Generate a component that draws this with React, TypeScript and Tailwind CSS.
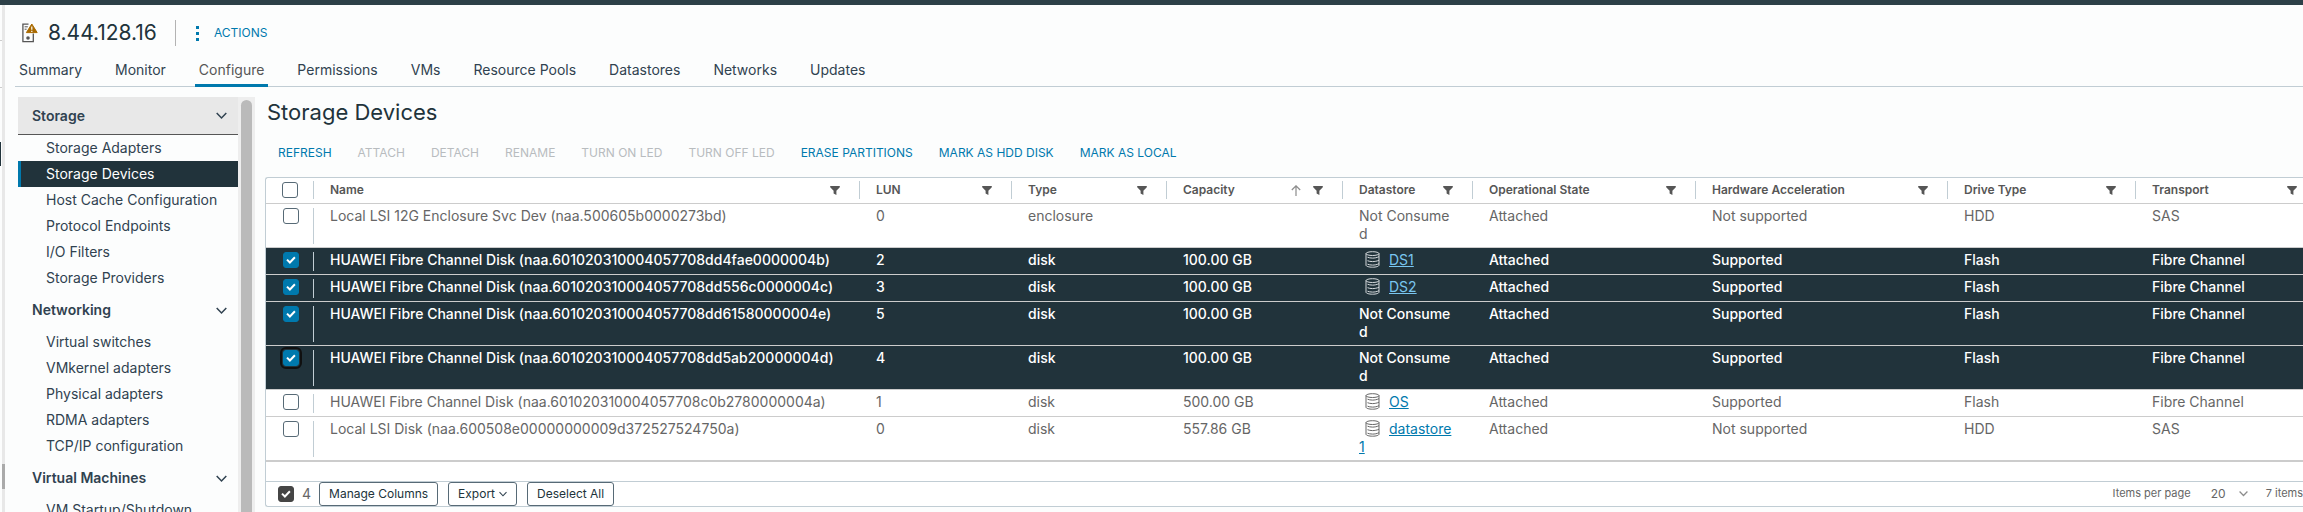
import { useState } from "react";
import clsx from "clsx";

type Device = {
  id: string;
  name: string;
  lun: number;
  type: string;
  capacity: string;
  datastore?: string;
  acceleration: string;
  drive: string;
  transport: string;
};

const tabs = [
  "Summary",
  "Monitor",
  "Configure",
  "Permissions",
  "VMs",
  "Resource Pools",
  "Datastores",
  "Networks",
  "Updates",
];

const menu = [
  {
    title: "Storage",
    items: [
      "Storage Adapters",
      "Storage Devices",
      "Host Cache Configuration",
      "Protocol Endpoints",
      "I/O Filters",
      "Storage Providers",
    ],
  },
  {
    title: "Networking",
    items: [
      "Virtual switches",
      "VMkernel adapters",
      "Physical adapters",
      "RDMA adapters",
      "TCP/IP configuration",
    ],
  },
  { title: "Virtual Machines", items: ["VM Startup/Shutdown"] },
];

const actions = [
  { label: "REFRESH", enabled: true },
  { label: "ATTACH", enabled: false },
  { label: "DETACH", enabled: false },
  { label: "RENAME", enabled: false },
  { label: "TURN ON LED", enabled: false },
  { label: "TURN OFF LED", enabled: false },
  { label: "ERASE PARTITIONS", enabled: true },
  { label: "MARK AS HDD DISK", enabled: true },
  { label: "MARK AS LOCAL", enabled: true },
];

const columns = [
  { label: "Name", width: "" },
  { label: "LUN", width: "w-[152px]" },
  { label: "Type", width: "w-[155px]" },
  { label: "Capacity", width: "w-[176px]", sorted: true },
  { label: "Datastore", width: "w-[130px]" },
  { label: "Operational State", width: "w-[223px]" },
  { label: "Hardware Acceleration", width: "w-[252px]" },
  { label: "Drive Type", width: "w-[188px]" },
  { label: "Transport", width: "w-[167px]" },
];

const devices: Device[] = [
  { id: "enc", name: "Local LSI 12G Enclosure Svc Dev (naa.500605b0000273bd)", lun: 0, type: "enclosure", capacity: "", acceleration: "Not supported", drive: "HDD", transport: "SAS" },
  { id: "4b", name: "HUAWEI Fibre Channel Disk (naa.601020310004057708dd4fae0000004b)", lun: 2, type: "disk", capacity: "100.00 GB", datastore: "DS1", acceleration: "Supported", drive: "Flash", transport: "Fibre Channel" },
  { id: "4c", name: "HUAWEI Fibre Channel Disk (naa.601020310004057708dd556c0000004c)", lun: 3, type: "disk", capacity: "100.00 GB", datastore: "DS2", acceleration: "Supported", drive: "Flash", transport: "Fibre Channel" },
  { id: "4e", name: "HUAWEI Fibre Channel Disk (naa.601020310004057708dd61580000004e)", lun: 5, type: "disk", capacity: "100.00 GB", acceleration: "Supported", drive: "Flash", transport: "Fibre Channel" },
  { id: "4d", name: "HUAWEI Fibre Channel Disk (naa.601020310004057708dd5ab20000004d)", lun: 4, type: "disk", capacity: "100.00 GB", acceleration: "Supported", drive: "Flash", transport: "Fibre Channel" },
  { id: "4a", name: "HUAWEI Fibre Channel Disk (naa.601020310004057708c0b2780000004a)", lun: 1, type: "disk", capacity: "500.00 GB", datastore: "OS", acceleration: "Supported", drive: "Flash", transport: "Fibre Channel" },
  { id: "local", name: "Local LSI Disk (naa.600508e00000000009d372527524750a)", lun: 0, type: "disk", capacity: "557.86 GB", datastore: "datastore1", acceleration: "Not supported", drive: "HDD", transport: "SAS" },
];

function HostIcon() {
  return (
    <svg width="16" height="20" viewBox="0 0 16 20" fill="none" aria-hidden="true">
      <path d="M6.500 1.200H.9v17.400h10.400V10.500" stroke="#565656" strokeWidth="1.300" />
      <path d="M2.600 3.800h3.200M2.600 6.200h2" stroke="#565656" />
      <circle cx="6" cy="15" r="1.800" fill="#565656" />
      <path d="M9.800 1 15.200 9.600H4.400Z" fill="#a96a00" stroke="#a96a00" strokeLinejoin="round" />
      <path d="M9.800 3.600v3.200M9.800 7.800v1.200" stroke="#fff" strokeWidth="1.200" />
    </svg>
  );
}

function Chevron({ size = 11, color = "#304250" }: { size?: number; color?: string }) {
  return (
    <svg width={size} height={size} viewBox="0 0 11 11" fill="none" aria-hidden="true">
      <path d="M.7 3 5.5 8l4.8-5" stroke={color} strokeWidth="1.5" />
    </svg>
  );
}

function FilterIcon() {
  return (
    <svg width="10" height="9" viewBox="0 0 10 9" aria-hidden="true">
      <path d="M.2 0h9.6v1.3L6.4 4.8V9L3.6 7.6V4.8L.2 1.3Z" fill="#565656" />
    </svg>
  );
}

function SortIcon() {
  return (
    <svg width="10" height="11" viewBox="0 0 10 11" fill="none" stroke="#8c8c8c" aria-hidden="true">
      <path d="M5 11V1M.8 5 5 .8 9.2 5" strokeWidth="1.2" />
    </svg>
  );
}

function DatastoreIcon({ light }: { light: boolean }) {
  return (
    <svg
      className="mr-[9px] ml-1.5 inline-block align-top"
      width="15"
      height="17"
      viewBox="0 0 15 17"
      fill="none"
      stroke={light ? "#d6dadd" : "#666"}
      aria-hidden="true"
    >
      <ellipse cx="7.5" cy="2.6" rx="6.5" ry="1.900" />
      <path d="M1 2.600v11.600c0 1.100 2.900 2 6.500 2s6.500-.9 6.500-2V2.600" />
      <path d="M2.500 6.200c1.200.5 3 .9 5 .9s4.500-.4 6.500-1.400M2.500 9.700c1.200.5 3 .9 5 .9s4.500-.4 6.500-1.400M2.500 13.200c1.200.5 3 .9 5 .9s4.500-.4 6.500-1.400" />
    </svg>
  );
}

type CheckboxProps = {
  label: string;
  checked: boolean;
  onChange: () => void;
  focused?: boolean;
  dark?: boolean;
};

function Checkbox({ label, checked, onChange, focused, dark }: CheckboxProps) {
  return (
    <span className="relative block size-4 shrink-0">
      <input
        type="checkbox"
        aria-label={label}
        checked={checked}
        onChange={onChange}
        className={clsx(
          "block size-4 appearance-none rounded-[3px] border",
          !checked && "border-[#576a76] bg-white",
          checked && !dark && "border-[#0079ad] bg-[#0079ad]",
          checked && dark && "border-[#454545] bg-[#454545]",
          focused && "outline-2 outline-offset-1 outline-[#101010]"
        )}
      />
      {checked && (
        <svg className="pointer-events-none absolute inset-0" width="16" height="16" viewBox="0 0 16 16" fill="none">
          <path d="m4 7.6 2.9 2.9 5-5.2" stroke="#fff" strokeWidth="2" />
        </svg>
      )}
    </span>
  );
}

function Sidebar() {
  const [current, setCurrent] = useState("Storage Devices");

  return (
    <div className="ml-[13px] flex w-[237px] shrink-0">
      <nav className="min-w-0 flex-1">
        {menu.map((group, i) => (
          <section key={group.title}>
            <button
              className={clsx(
                "flex h-[38px] w-full items-center justify-between pr-[11px] pl-3.5 font-semibold",
                i === 0 && "border-b border-[#565656] bg-[#e8e8e8]"
              )}
            >
              {group.title}
              <Chevron />
            </button>
            {group.items.map((item) => (
              <a
                key={item}
                href="#"
                onClick={() => setCurrent(item)}
                className={clsx(
                  "flex h-[26px] items-center border-l-3 pl-[25px]",
                  item === current ? "border-[#0079ad] bg-[#21333b] text-white" : "border-transparent"
                )}
              >
                {item}
              </a>
            ))}
          </section>
        ))}
      </nav>
      <div className="flex w-[17px] justify-center bg-[#eee] pt-[3px]">
        <div className="w-[11px] rounded-t-full bg-[#bababa]" />
      </div>
    </div>
  );
}

function DeviceTable() {
  const [selected, setSelected] = useState(["4b", "4c", "4e", "4d"]);

  const toggle = (id: string) => {
    setSelected((prev) => (prev.includes(id) ? prev.filter((x) => x !== id) : [...prev, id]));
  };

  const allSelected = selected.length === devices.length;
  const footerButton = "flex h-6 items-center gap-1 rounded-[3px] border border-[#576a76] px-[9px] text-[#21333b]";

  return (
    <div className="rounded-l-[3px] border border-r-0 border-[#c1cdd4] bg-white text-[#666]">
      <table className="w-full table-fixed border-collapse text-left">
        <colgroup>
          <col className="w-12" />
          {columns.map((c) => (
            <col key={c.label} className={c.width} />
          ))}
        </colgroup>
        <thead className="text-xs text-[#565656]">
          <tr className="h-[25px] border-b border-[#ccc]">
            <th className="p-0">
              <div className="flex h-[18px] items-center border-r border-[#c1cdd4] pl-4">
                <Checkbox
                  label="Select all"
                  checked={allSelected}
                  onChange={() => setSelected(allSelected ? [] : devices.map((d) => d.id))}
                />
              </div>
            </th>
            {columns.map((c, i) => (
              <th key={c.label} className="p-0 font-semibold">
                <div
                  className={clsx(
                    "flex h-[18px] items-center gap-3 pl-4",
                    i < columns.length - 1 ? "border-r border-[#c1cdd4] pr-[19px]" : "pr-1.5"
                  )}
                >
                  <span className="flex-1 whitespace-nowrap">{c.label}</span>
                  {c.sorted && <SortIcon />}
                  <button aria-label={`Filter ${c.label}`}>
                    <FilterIcon />
                  </button>
                </div>
              </th>
            ))}
          </tr>
        </thead>
        <tbody>
          {devices.map((d) => {
            const on = selected.includes(d.id);
            return (
              <tr
                key={d.id}
                className={clsx(
                  "border-b border-[#ccc] align-top leading-[18px] last:border-b-2",
                  on && "bg-[#21333b] font-medium text-white"
                )}
              >
                <td className="h-[27px] pt-1 pb-[3px]">
                  <div className="h-full border-r border-[#c1cdd4] pl-[17px]">
                    <Checkbox label={d.name} checked={on} onChange={() => toggle(d.id)} focused={d.id === "4d"} />
                  </div>
                </td>
                <td className="truncate pt-[3px] pl-4">{d.name}</td>
                <td className="pt-[3px] pl-4">{d.lun}</td>
                <td className="pt-[3px] pl-4">{d.type}</td>
                <td className="pt-[3px] pl-4">{d.capacity}</td>
                <td className="pt-[3px] pr-[18px] pb-1 pl-4 break-all">
                  {d.datastore ? (
                    <>
                      <DatastoreIcon light={on} />
                      <a href="#" className={clsx("font-normal underline", on ? "text-[#79c6f0]" : "text-[#0079ad]")}>
                        {d.datastore}
                      </a>
                    </>
                  ) : (
                    "Not Consumed"
                  )}
                </td>
                <td className="pt-[3px] pl-4">Attached</td>
                <td className="pt-[3px] pl-4">{d.acceleration}</td>
                <td className="pt-[3px] pl-4">{d.drive}</td>
                <td className="pt-[3px] pl-4">{d.transport}</td>
              </tr>
            );
          })}
        </tbody>
      </table>
      <div className="mt-[19px] flex h-[25px] items-center border-t border-[#c1cdd4] pl-3 text-xs">
        <Checkbox label="Selected rows" checked={selected.length > 0} onChange={() => setSelected([])} dark />
        <span className="ml-2 text-sm">{selected.length}</span>
        <div className="ml-2 flex gap-2.5">
          <button className={footerButton}>Manage Columns</button>
          <button className={footerButton}>
            Export
            <Chevron size={8} />
          </button>
          <button className={footerButton} onClick={() => setSelected([])}>
            Deselect All
          </button>
        </div>
        <label className="ml-auto flex items-center gap-5 text-[11px]">
          Items per page
          <span className="flex items-center">
            <select className="w-7 appearance-none text-xs" defaultValue="20">
              <option>20</option>
              <option>50</option>
              <option>100</option>
            </select>
            <Chevron size={9} color="#8c8c8c" />
          </span>
        </label>
        <span className="ml-[18px] text-[11px] whitespace-nowrap">7 items</span>
      </div>
    </div>
  );
}

export default function App() {
  const [tab, setTab] = useState("Configure");

  return (
    <div className="flex h-screen flex-col overflow-hidden bg-[#fcfdfd] font-[Inter,sans-serif] text-sm text-[#304250]">
      <div className="h-[5px] shrink-0 bg-[#2d4048]" />
      <div className="flex min-h-0 flex-1">
        {/* collapsed navigator and its splitter */}
        <div className="flex w-0.5 flex-col">
          <div className="h-9 border-b border-[#ccc]" />
          <div className="h-[47px] border-b border-[#ccc]" />
          <div className="mt-[54px] h-6 w-px bg-[#21333b]" />
        </div>
        <div className="w-[3px] bg-[#e8e8e8] pt-[459px]">
          <div className="h-[25px] bg-[#aaa]" />
        </div>

        <div className="flex min-w-0 flex-1 flex-col">
          <header className="flex h-14 shrink-0 items-center pl-[17px]">
            <HostIcon />
            <h1 className="ml-2.5 text-[21px] text-[#21333b]">8.44.128.16</h1>
            <div className="ml-[18px] h-[26px] w-px bg-[#b3b3b3]" />
            <button className="ml-5 flex items-center gap-[15px] text-xs text-[#0079ad]">
              <svg width="3" height="15" viewBox="0 0 3 15" fill="currentColor" aria-hidden="true">
                <path d="M0 0h3v3H0zM0 6h3v3H0zM0 12h3v3H0z" />
              </svg>
              ACTIONS
            </button>
          </header>

          <div className="ml-2.5 flex h-[26px] shrink-0 gap-[25px] border-b border-[#c1cdd4]">
            {tabs.map((t) => (
              <button
                key={t}
                onClick={() => setTab(t)}
                className={clsx(
                  "-mb-px border-b-3 px-1 pb-1.5 leading-[15px] whitespace-nowrap",
                  t === tab ? "border-[#0079ad] text-[#565656]" : "border-transparent"
                )}
              >
                {t}
              </button>
            ))}
          </div>

          <div className="mt-2.5 flex min-h-0 flex-1">
            <Sidebar />
            <main className="ml-2.5 min-w-0 flex-1">
              <h2 className="pl-0.5 text-[22px] leading-[30px] text-[#21333b]">Storage Devices</h2>
              <div className="mt-[18px] mb-4 flex h-4 items-center gap-[26px] pl-[13px] text-xs">
                {actions.map((a) => (
                  <button
                    key={a.label}
                    disabled={!a.enabled}
                    className={clsx("whitespace-nowrap", a.enabled ? "text-[#0079ad]" : "text-[#b8bcbf]")}
                  >
                    {a.label}
                  </button>
                ))}
              </div>
              <DeviceTable />
            </main>
          </div>
        </div>
      </div>
    </div>
  );
}
